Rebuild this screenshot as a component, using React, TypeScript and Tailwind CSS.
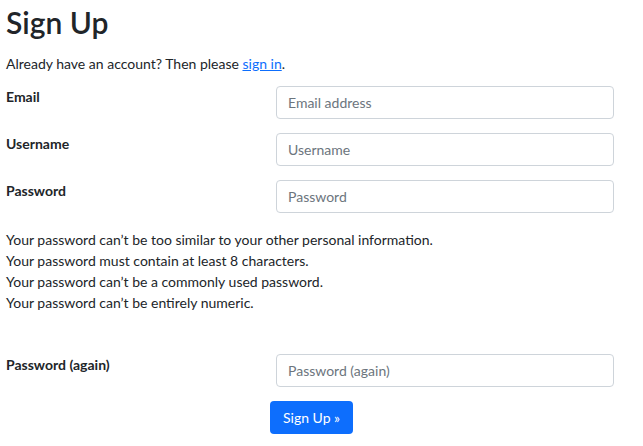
export default function App() {
  const fields = [
    { label: 'Email', placeholder: 'Email address', type: 'email' },
    { label: 'Username', placeholder: 'Username', type: 'text' },
    { label: 'Password', placeholder: 'Password', type: 'password' },
  ];

  return (
    <div className="min-h-screen bg-white px-[6px] text-[14px] leading-[1.5] text-[#212529] font-['Lato',sans-serif]">
      <h1 className="pt-[4px] text-[30px] font-semibold leading-[1.2] mb-[13px]">Sign Up</h1>
      <p className="mb-[12px]">
        Already have an account? Then please{' '}
        <a href="#" className="text-[#0d6efd] underline">sign in</a>.
      </p>

      {fields.map((f) => (
        <div key={f.label} className="flex mb-[14px]">
          <label className="w-[270px] font-bold">{f.label}</label>
          <input
            type={f.type}
            placeholder={f.placeholder}
            className="w-[338px] h-[33px] rounded-[4px] border border-[#ced4da] px-[11px] placeholder:text-[#6c757d] outline-none"
          />
        </div>
      ))}

      <div className="pt-[2px] mb-[41px]">
        <div>Your password can’t be too similar to your other personal information.</div>
        <div>Your password must contain at least 8 characters.</div>
        <div>Your password can’t be a commonly used password.</div>
        <div>Your password can’t be entirely numeric.</div>
      </div>

      <div className="flex mb-[14px]">
        <label className="w-[270px] font-bold">Password (again)</label>
        <input
          type="password"
          placeholder="Password (again)"
          className="w-[338px] h-[33px] rounded-[4px] border border-[#ced4da] px-[11px] placeholder:text-[#6c757d] outline-none"
        />
      </div>

      <div className="pl-[264px]">
        <button className="h-[33px] px-[13px] rounded-[4px] bg-[#0d6efd] text-white">Sign Up »</button>
      </div>
    </div>
  );
}
